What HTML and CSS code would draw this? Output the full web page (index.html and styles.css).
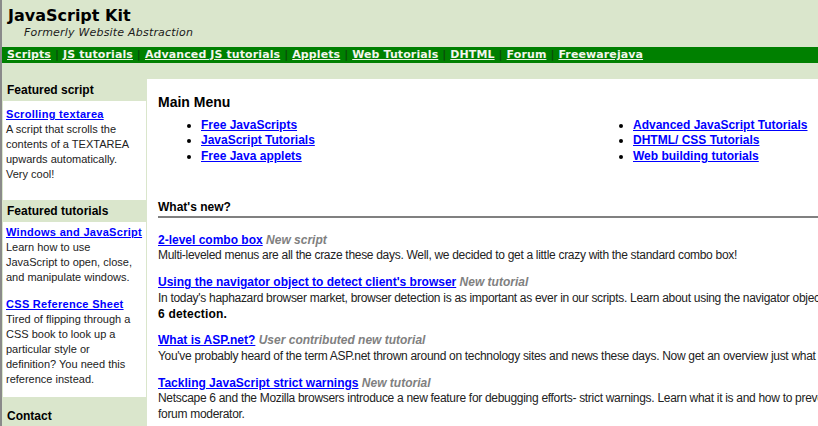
FILE: index.html
```html
<!DOCTYPE html>
<html lang="en">
<head>
<meta charset="utf-8">
<title>JavaScript Kit</title>
<link rel="stylesheet" href="styles.css">
</head>
<body>
<header class="masthead">
  <h1 class="site-title">JavaScript Kit</h1>
  <p class="site-tagline">Formerly Website Abstraction</p>
</header>
<nav class="topnav">
  <a href="#">Scripts</a> <span class="sep">|</span>
  <a href="#">JS tutorials</a> <span class="sep">|</span>
  <a href="#">Advanced JS tutorials</a> <span class="sep">|</span>
  <a href="#">Applets</a> <span class="sep">|</span>
  <a href="#">Web Tutorials</a> <span class="sep">|</span>
  <a href="#">DHTML</a> <span class="sep">|</span>
  <a href="#">Forum</a> <span class="sep">|</span>
  <a href="#">Freewarejava</a>
</nav>
<div class="layout">
  <aside class="sidebar">
    <h4 class="side-head">Featured script</h4>
    <div class="side-box side-box--first">
      <p><a class="side-link" href="#">Scrolling textarea</a><br>A script that scrolls the contents of a TEXTAREA upwards automatically. Very cool!</p>
    </div>
    <h4 class="side-head">Featured tutorials</h4>
    <div class="side-box side-box--second">
      <p><a class="side-link" href="#">Windows and JavaScript</a><br>Learn how to use JavaScript to open, close, and manipulate windows.</p>
      <p><a class="side-link" href="#">CSS Reference Sheet</a><br>Tired of flipping through a CSS book to look up a particular style or definition? You need this reference instead.</p>
    </div>
    <h4 class="side-head side-head--contact">Contact</h4>
  </aside>
  <main class="content">
    <h2 class="menu-title">Main Menu</h2>
    <div class="menu-grid">
      <ul class="menu-list">
        <li><a href="#">Free JavaScripts</a></li>
        <li><a href="#">JavaScript Tutorials</a></li>
        <li><a href="#">Free Java applets</a></li>
      </ul>
      <ul class="menu-list">
        <li><a href="#">Advanced JavaScript Tutorials</a></li>
        <li><a href="#">DHTML/ CSS Tutorials</a></li>
        <li><a href="#">Web building tutorials</a></li>
      </ul>
    </div>
    <h3 class="news-head">What's new?</h3>
    <div class="news">
      <div class="news-item">
        <a class="news-link" href="#">2-level combo box</a> <span class="news-tag">New script</span><br>
        <span class="news-desc">Multi-leveled menus are all the craze these days. Well, we decided to get a little crazy with the standard combo box!</span>
      </div>
      <div class="news-item">
        <a class="news-link" href="#">Using the navigator object to detect client's browser</a> <span class="news-tag">New tutorial</span><br>
        <span class="news-desc">In today's haphazard browser market, browser detection is as important as ever in our scripts. Learn about using the navigator object, including Netscape<br><b>6 detection.</b></span>
      </div>
      <div class="news-item">
        <a class="news-link" href="#">What is ASP.net?</a> <span class="news-tag">User contributed new tutorial</span><br>
        <span class="news-desc">You've probably heard of the term ASP.net thrown around on technology sites and news these days. Now get an overview just what it is.</span>
      </div>
      <div class="news-item">
        <a class="news-link" href="#">Tackling JavaScript strict warnings</a> <span class="news-tag">New tutorial</span><br>
        <span class="news-desc">Netscape 6 and the Mozilla browsers introduce a new feature for debugging efforts- strict warnings. Learn what it is and how to prevent them, by our<br>forum moderator.</span>
      </div>
    </div>
  </main>
</div>
</body>
</html>
```
FILE: styles.css
```css
* { box-sizing: border-box; }

html, body { height: 100%; }

body {
  margin: 0;
  background: #dae6cc;
  border-left: 2px solid #8a8a8a;
  overflow: hidden;
  font-family: "Liberation Sans", Arial, sans-serif;
  color: #1a1a1a;
}

a { color: #0000ff; }

.masthead {
  padding: 6px 0 0 6px;
}

.site-title {
  margin: 0;
  font: bold 16px/20px "DejaVu Sans", Verdana, sans-serif;
  color: #000;
}

.site-tagline {
  margin: 0 0 0 16px;
  font: italic 11px/14px "DejaVu Sans", Verdana, sans-serif;
  letter-spacing: 0.2px;
  color: #1a1a1a;
}

.topnav {
  margin-top: 7px;
  height: 16px;
  line-height: 16px;
  background: #008000;
  padding-left: 5px;
  font: bold 11px/16px "DejaVu Sans", Verdana, sans-serif;
  letter-spacing: 0.1px;
  white-space: nowrap;
  color: #0a4a0a;
}

.topnav a { color: #f2f5ec; }

.topnav .sep { color: #0b4d0b; }

.layout {
  display: flex;
  align-items: flex-start;
  margin-top: 16px;
}

.sidebar {
  width: 143px;
  margin-left: 1px;
  flex-shrink: 0;
}

.side-head {
  margin: 0;
  height: 22px;
  line-height: 22px;
  padding-left: 4px;
  font-size: 12px;
  font-weight: bold;
  color: #000;
}

.side-head--contact {
  height: 28px;
  padding-top: 8px;
  line-height: 22px;
}

.side-box {
  background: #fff;
  font-size: 11px;
  line-height: 15px;
  color: #222;
}

.side-box--first { padding: 6px 6px 18px 3px; }
.side-box--second { padding: 3px 6px 10px 3px; }

.side-box p { margin: 0; }
.side-box p + p { margin-top: 12px; }

.side-link {
  font-weight: bold;
  letter-spacing: 0.3px;
  white-space: nowrap;
}

.content {
  flex-shrink: 0;
  width: 1000px;
  min-height: 420px;
  margin-left: 1px;
  background: #fff;
  padding: 14px 11px 20px;
}

.menu-title {
  margin: 0;
  font-size: 14px;
  line-height: 18px;
  font-weight: bold;
  color: #000;
}

.menu-grid {
  display: grid;
  grid-template-columns: 432px 432px;
  margin-top: 6.5px;
}

.menu-list {
  margin: 0;
  padding-left: 43px;
  font-size: 12px;
  line-height: 15.6px;
  font-weight: bold;
  color: #000;
}

.news-head {
  margin: 35.5px 0 0;
  padding-bottom: 1px;
  border-bottom: 2px solid #808080;
  font-size: 12px;
  line-height: 15px;
  font-weight: bold;
  color: #000;
}

.news {
  margin-top: 15px;
  white-space: nowrap;
}

.news-item {
  margin-bottom: 11px;
  font-size: 12px;
  line-height: 15.7px;
  color: #222;
}

.news-desc { letter-spacing: -0.3px; }

.news-item b { color: #000; letter-spacing: 0.2px; }

.news-link { font-weight: bold; }

.news-tag {
  color: #808080;
  font-weight: bold;
  font-style: italic;
}
```
